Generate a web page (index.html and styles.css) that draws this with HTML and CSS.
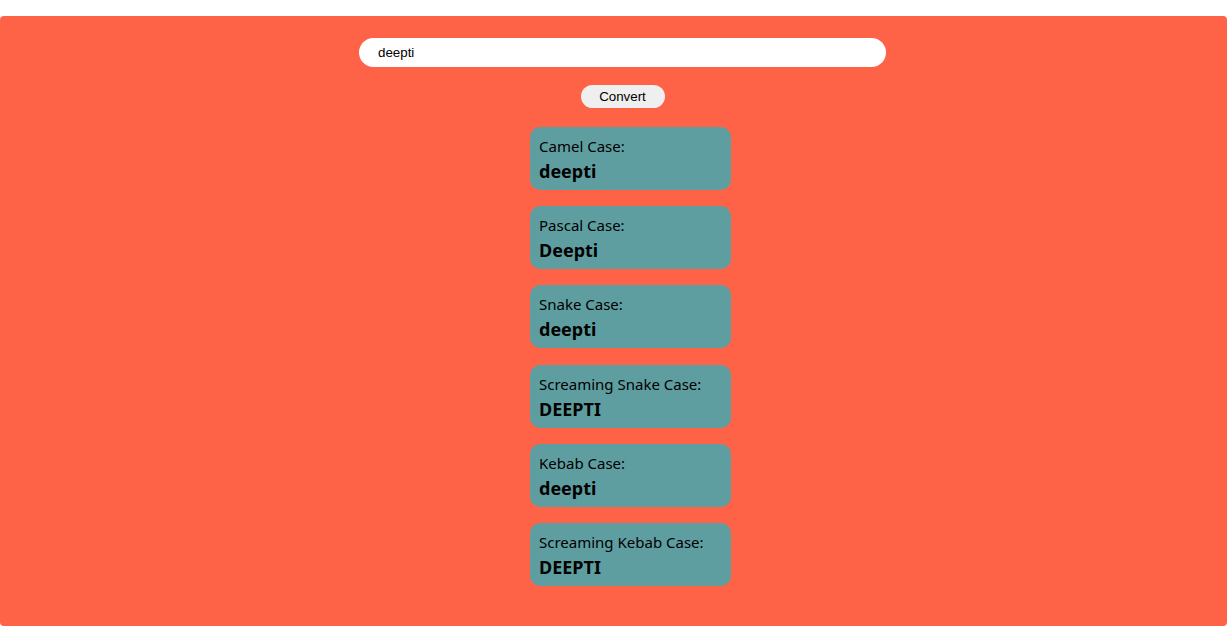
FILE: index.html
```html
<!DOCTYPE html>
<html lang="en-US">

<head>
	<title>Case Converter</title>
	<meta charset="utf-8">
	<meta name="viewport" content="width=device-width, initial-scale=1.0">
	<link rel="stylesheet" href="styles.css">
</head>

<body>

	<div class="app">
		<input class="text-input" type="text" value="deepti">

		<button class="btn">Convert</button>

		<div class="results">
			<div class="card">
				<div class="card-label">Camel Case:</div>
				<div class="card-value">deepti</div>
			</div>
			<div class="card">
				<div class="card-label">Pascal Case:</div>
				<div class="card-value">Deepti</div>
			</div>
			<div class="card">
				<div class="card-label">Snake Case:</div>
				<div class="card-value">deepti</div>
			</div>
			<div class="card">
				<div class="card-label">Screaming Snake Case:</div>
				<div class="card-value">DEEPTI</div>
			</div>
			<div class="card">
				<div class="card-label">Kebab Case:</div>
				<div class="card-value">deepti</div>
			</div>
			<div class="card">
				<div class="card-label">Screaming Kebab Case:</div>
				<div class="card-value">DEEPTI</div>
			</div>
		</div>
	</div>

</body>

</html>
```

FILE: styles.css
```css
*,
*:before,
*:after {
	box-sizing: border-box;
}

body {
	margin: 0;
	padding-top: 16px;
	font-family: "Noto Sans", sans-serif;
}

/**
 * Layout
 */
.app {
	background-color: tomato;
	border-radius: 4px;
	height: 610px;
	padding-top: 22px;
	padding-left: 18px;
	display: flex;
	flex-direction: column;
	align-items: center;
}

.text-input {
	width: 527px;
	height: 29px;
	border: 0;
	border-radius: 15px;
	padding: 0 19px;
	font-family: "Liberation Sans", Arial, sans-serif;
	font-size: 13.33px;
	color: #000000;
	background-color: #ffffff;
	outline: none;
}

.btn {
	margin-top: 18px;
	width: 84px;
	height: 23px;
	border: 0;
	border-radius: 12px;
	background-color: #efefef;
	font-family: "Liberation Sans", Arial, sans-serif;
	font-size: 13.33px;
	color: #000000;
	padding: 0;
}

/**
 * Result cards
 */
.results {
	margin-top: 19px;
	margin-left: 16px;
	display: flex;
	flex-direction: column;
	gap: 16.2px;
}

.card {
	width: 201px;
	height: 63px;
	background-color: cadetblue;
	border-radius: 10px;
	padding: 9px 9px;
}

.card-label {
	font-size: 15px;
	line-height: 21px;
	color: #000000;
}

.card-value {
	margin-top: 1px;
	font-size: 18px;
	font-weight: bold;
	line-height: 26px;
	color: #000000;
}
```
